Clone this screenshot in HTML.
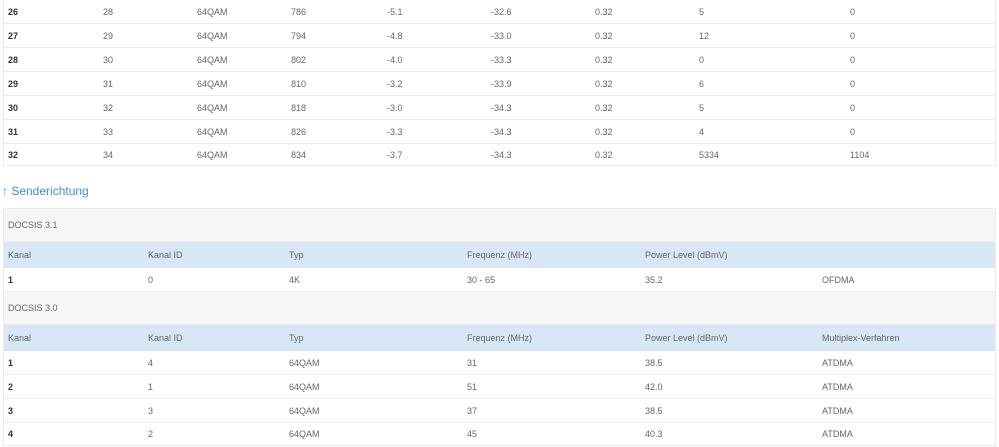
<!DOCTYPE html>
<html><head><meta charset="utf-8"><style>
*{margin:0;padding:0;box-sizing:border-box}
body{width:999px;height:447px;background:#fff;font-family:"Liberation Sans",sans-serif;font-size:9px;color:#666;position:relative;overflow:hidden}
.r{position:absolute;left:3px;width:993px;border-left:1px solid #ececec;border-right:1px solid #ececec;border-bottom:1px solid #ececec}
.r span{position:absolute;top:50%;transform:translateY(-50%);white-space:nowrap}
.r span.b{font-weight:bold;color:#333}
.g{background:#f6f6f4}
.h{background:#d8e7f5;border-bottom-color:#d8e7f5}
.lk{position:absolute;left:2px;top:184px;font-size:12px;color:#3f8fd6}
</style></head><body>
<div class="r" style="top:0;height:24px"><span class="b" style="left:4px">26</span><span style="left:99px">28</span><span style="left:193px">64QAM</span><span style="left:287px">786</span><span style="left:383px">-5.1</span><span style="left:487px">-32.6</span><span style="left:591px">0.32</span><span style="left:695px">5</span><span style="left:846px">0</span></div>
<div class="r" style="top:24px;height:24px"><span class="b" style="left:4px">27</span><span style="left:99px">29</span><span style="left:193px">64QAM</span><span style="left:287px">794</span><span style="left:383px">-4.8</span><span style="left:487px">-33.0</span><span style="left:591px">0.32</span><span style="left:695px">12</span><span style="left:846px">0</span></div>
<div class="r" style="top:48px;height:24px"><span class="b" style="left:4px">28</span><span style="left:99px">30</span><span style="left:193px">64QAM</span><span style="left:287px">802</span><span style="left:383px">-4.0</span><span style="left:487px">-33.3</span><span style="left:591px">0.32</span><span style="left:695px">0</span><span style="left:846px">0</span></div>
<div class="r" style="top:72px;height:24px"><span class="b" style="left:4px">29</span><span style="left:99px">31</span><span style="left:193px">64QAM</span><span style="left:287px">810</span><span style="left:383px">-3.2</span><span style="left:487px">-33.9</span><span style="left:591px">0.32</span><span style="left:695px">6</span><span style="left:846px">0</span></div>
<div class="r" style="top:96px;height:24px"><span class="b" style="left:4px">30</span><span style="left:99px">32</span><span style="left:193px">64QAM</span><span style="left:287px">818</span><span style="left:383px">-3.0</span><span style="left:487px">-34.3</span><span style="left:591px">0.32</span><span style="left:695px">5</span><span style="left:846px">0</span></div>
<div class="r" style="top:120px;height:24px"><span class="b" style="left:4px">31</span><span style="left:99px">33</span><span style="left:193px">64QAM</span><span style="left:287px">826</span><span style="left:383px">-3.3</span><span style="left:487px">-34.3</span><span style="left:591px">0.32</span><span style="left:695px">4</span><span style="left:846px">0</span></div>
<div class="r" style="top:144px;height:22px"><span class="b" style="left:4px">32</span><span style="left:99px">34</span><span style="left:193px">64QAM</span><span style="left:287px">834</span><span style="left:383px">-3.7</span><span style="left:487px">-34.3</span><span style="left:591px">0.32</span><span style="left:695px">5334</span><span style="left:846px">1104</span></div>
<div class="lk">↑ Senderichtung</div>
<div class="r g" style="top:208px;height:34px;border-top:1px solid #ececec"><span style="left:4px">DOCSIS 3.1</span></div>
<div class="r h" style="top:242px;height:26px"><span style="left:4px">Kanal</span><span style="left:144px">Kanal ID</span><span style="left:285px">Typ</span><span style="left:463px">Frequenz (MHz)</span><span style="left:641px">Power Level (dBmV)</span></div>
<div class="r" style="top:268px;height:24px"><span class="b" style="left:4px">1</span><span style="left:144px">0</span><span style="left:285px">4K</span><span style="left:463px">30 - 65</span><span style="left:641px">35.2</span><span style="left:818px">OFDMA</span></div>
<div class="r g" style="top:292px;height:33px"><span style="left:4px">DOCSIS 3.0</span></div>
<div class="r h" style="top:325px;height:26px"><span style="left:4px">Kanal</span><span style="left:144px">Kanal ID</span><span style="left:285px">Typ</span><span style="left:463px">Frequenz (MHz)</span><span style="left:641px">Power Level (dBmV)</span><span style="left:818px">Multiplex-Verfahren</span></div>
<div class="r" style="top:351px;height:24px"><span class="b" style="left:4px">1</span><span style="left:144px">4</span><span style="left:285px">64QAM</span><span style="left:463px">31</span><span style="left:641px">38.5</span><span style="left:818px">ATDMA</span></div>
<div class="r" style="top:375px;height:24px"><span class="b" style="left:4px">2</span><span style="left:144px">1</span><span style="left:285px">64QAM</span><span style="left:463px">51</span><span style="left:641px">42.0</span><span style="left:818px">ATDMA</span></div>
<div class="r" style="top:399px;height:24px"><span class="b" style="left:4px">3</span><span style="left:144px">3</span><span style="left:285px">64QAM</span><span style="left:463px">37</span><span style="left:641px">38.5</span><span style="left:818px">ATDMA</span></div>
<div class="r" style="top:423px;height:23px"><span class="b" style="left:4px">4</span><span style="left:144px">2</span><span style="left:285px">64QAM</span><span style="left:463px">45</span><span style="left:641px">40.3</span><span style="left:818px">ATDMA</span></div>
</body></html>
